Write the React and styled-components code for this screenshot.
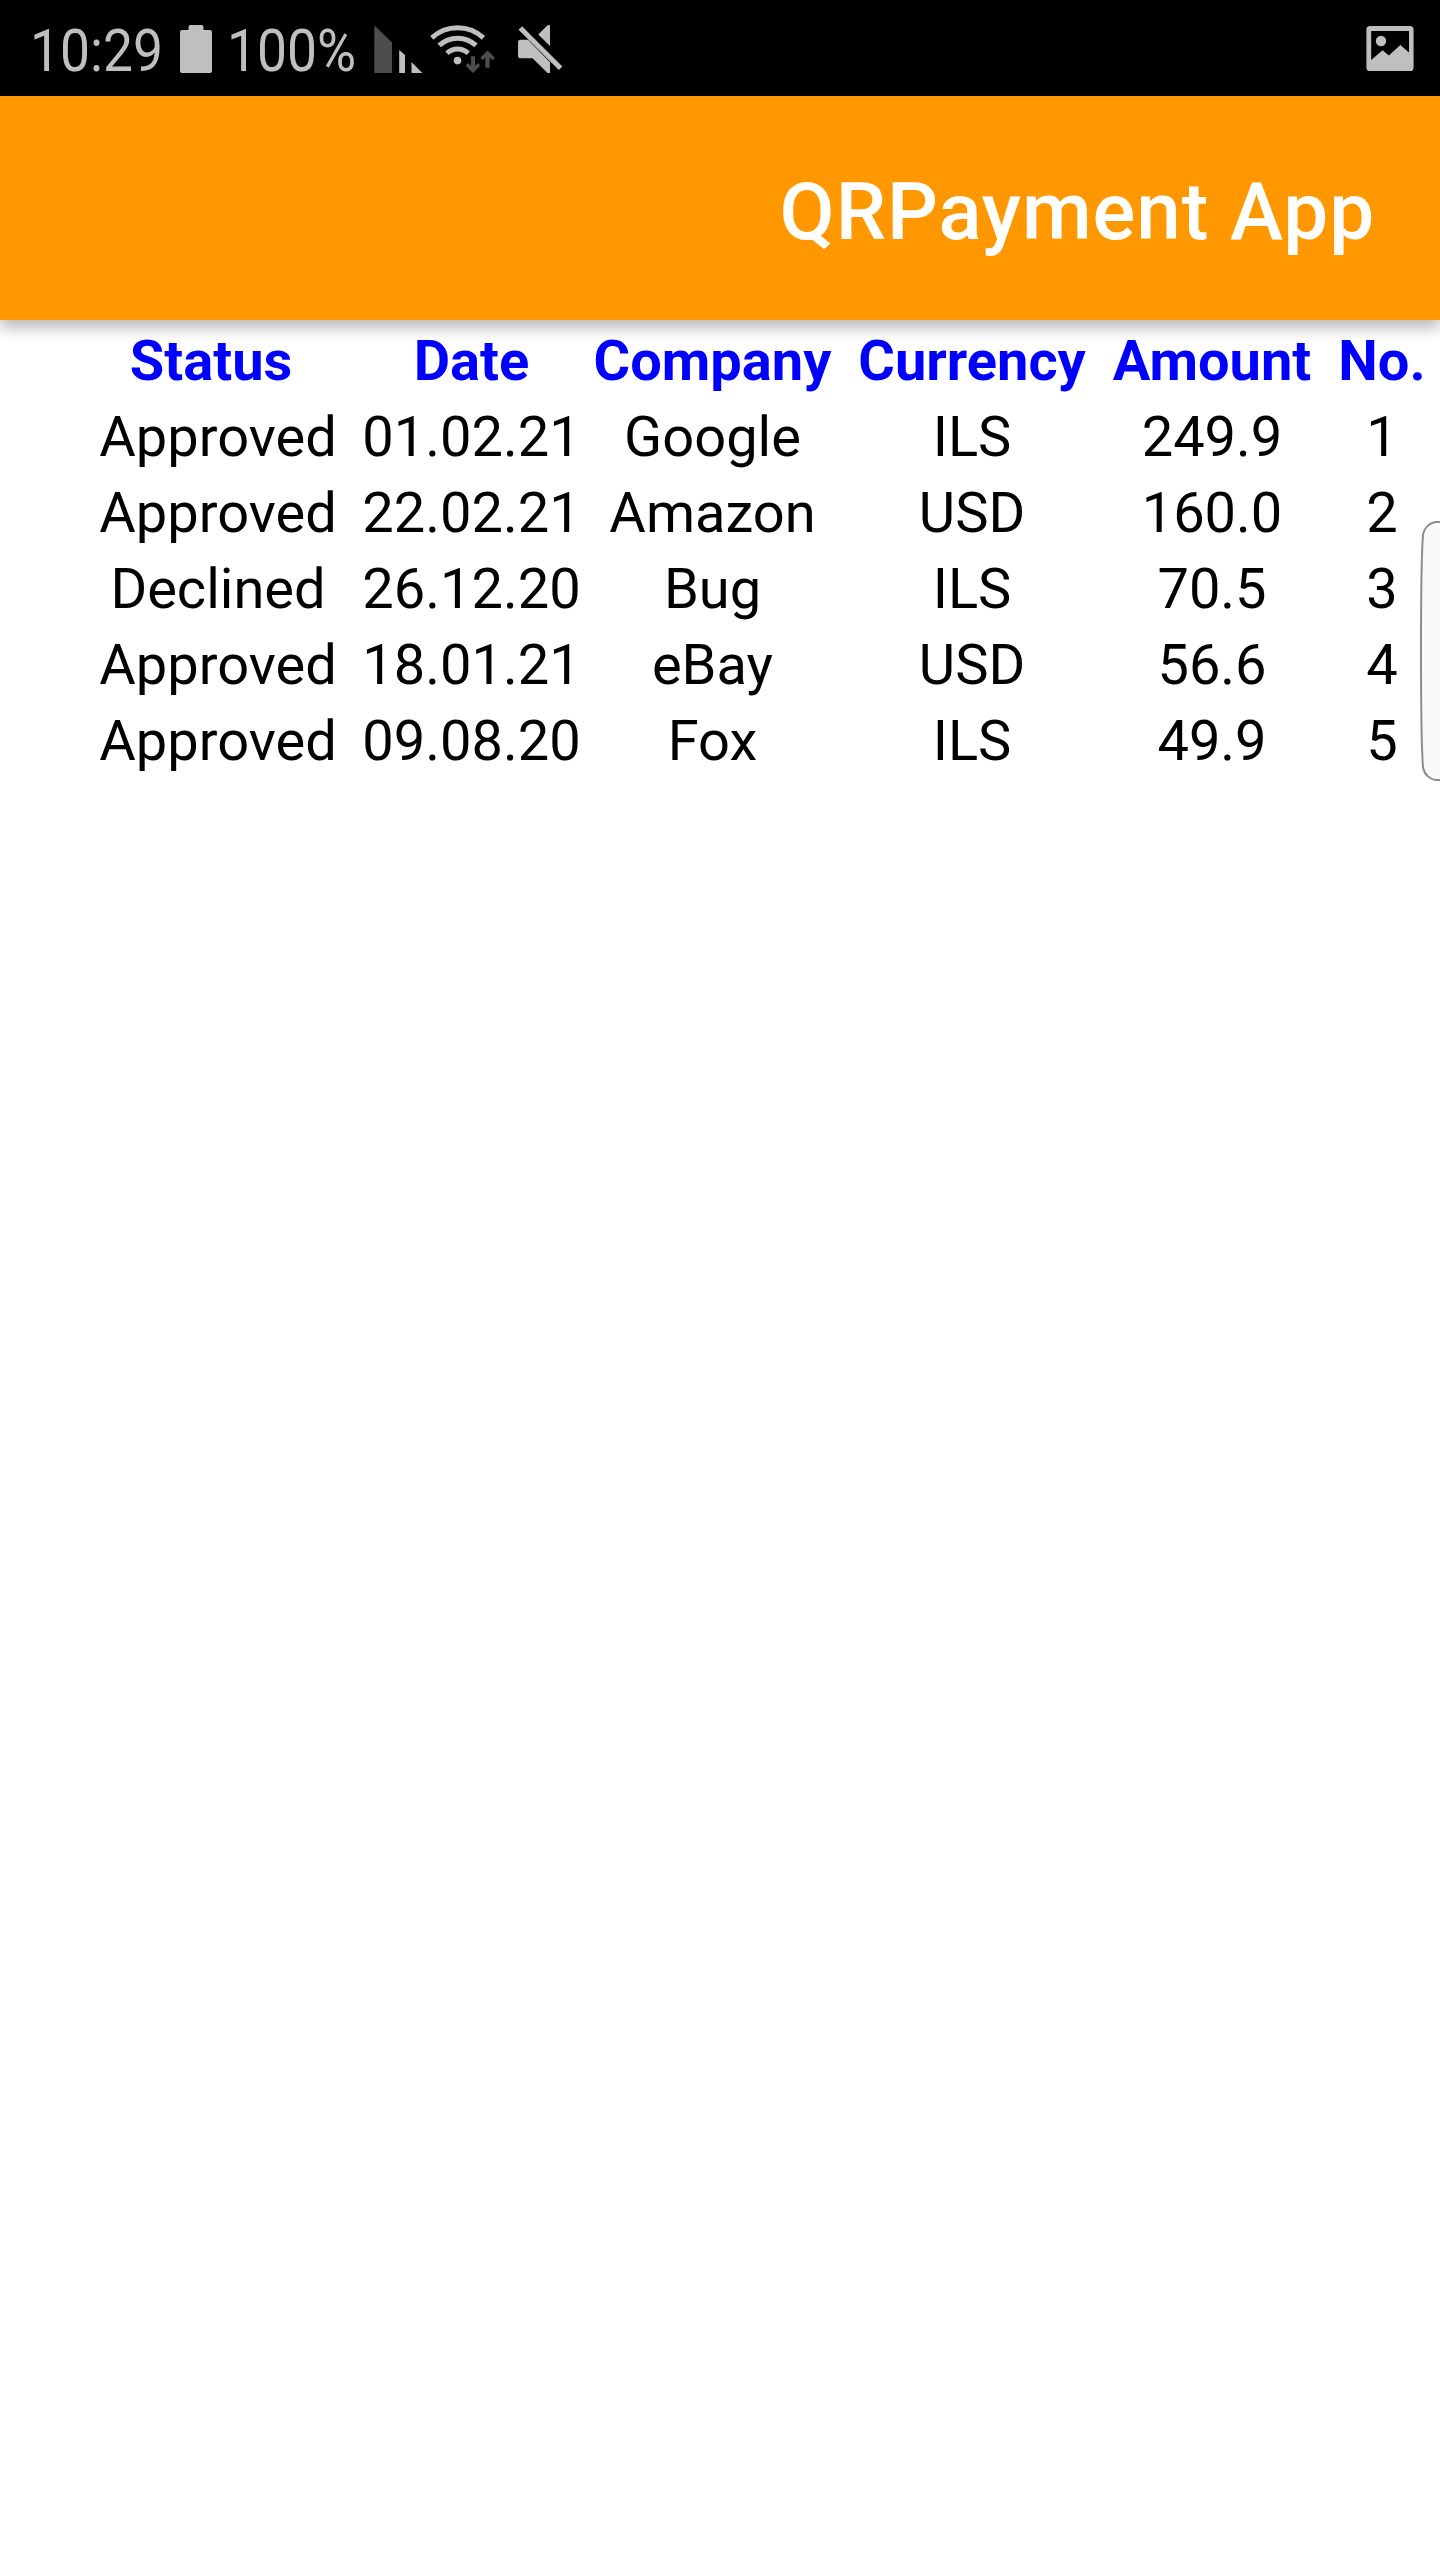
import React from "react";
import styled, { createGlobalStyle } from "styled-components";

const GlobalStyle = createGlobalStyle`
  html, body { margin: 0; padding: 0; background: #fff; }
  * { box-sizing: border-box; }
`;

const Screen = styled.div`
  position: relative;
  display: flex;
  flex-direction: column;
  width: 1440px;
  height: 2560px;
  overflow: hidden;
  background: #fff;
  font-family: Roboto, "Liberation Sans", sans-serif;
`;

const StatusBar = styled.div`
  display: flex;
  justify-content: space-between;
  flex: none;
  height: 96px;
  padding: 0 22px 0 30px;
  background: #000;
  color: #bfbfbf;
`;

const StatusGroup = styled.div`
  display: flex;
`;

const StatusText = styled.div`
  width: ${(p) => p.$width}px;
  line-height: 102px;
  font-size: 60px;
  white-space: nowrap;
  transform: scaleX(0.89);
  transform-origin: 0 50%;
`;

const Glyph = styled.svg`
  display: block;
  flex: none;
`;

const AppBar = styled.header`
  position: relative;
  z-index: 1;
  display: flex;
  justify-content: flex-end;
  flex: none;
  height: 224px;
  padding-right: 65px;
  background: #ff9800;
  box-shadow: 0 8px 14px rgba(0, 0, 0, 0.28);
`;

const Title = styled.h1`
  margin: 0;
  color: #fff;
  font-size: 80px;
  font-weight: 500;
  letter-spacing: 0.9px;
  line-height: 232px;
  white-space: nowrap;
`;

const Table = styled.div`
  display: grid;
  grid-template-columns: 288px 219px 263px 256px 224px 116px;
  grid-auto-rows: 76px;
  justify-content: end;
  padding-top: 4px;
`;

const Cell = styled.div`
  color: ${(p) => (p.$head ? "#0000ff" : "#000")};
  font-size: 56px;
  font-weight: ${(p) => (p.$head ? 700 : 400)};
  line-height: 74px;
  text-align: center;
  white-space: pre;
`;

const EdgeHandle = styled.svg`
  position: absolute;
  top: 516px;
  right: 0;
`;

const columns = ["Status ", "Date", "Company", "Currency", "Amount", "No."];
const rows = [
  ["Approved", "01.02.21", "Google", "ILS", "249.9", "1"],
  ["Approved", "22.02.21", "Amazon", "USD", "160.0", "2"],
  ["Declined", "26.12.20", "Bug", "ILS", "70.5", "3"],
  ["Approved", "18.01.21", "eBay", "USD", "56.6", "4"],
  ["Approved", "09.08.20", "Fox", "ILS", "49.9", "5"],
];

const Battery = () => (
  <Glyph width="47" height="96" viewBox="180 0 47 96" fill="#bfbfbf">
    <path d="M182 30H188.5V27Q188.5 25 190.5 25H201.5Q203.5 25 203.5 27V30H210Q212 30 212 32V71Q212 73 210 73H182Q180 73 180 71V32Q180 30 182 30Z" />
  </Glyph>
);

const Connectivity = () => (
  <Glyph width="210" height="96" viewBox="370 0 210 96" fill="#bfbfbf">
    <path d="M374.3 25.3L392 42.5V73H374.3Z" fill="#4d4d4d" />
    <path d="M399.2 50L405 55V73H399.2ZM411.5 62L422.3 73H411.5Z" />
    <circle cx="457.5" cy="60.6" r="3.8" />
    <g fill="none" stroke="#bfbfbf" strokeWidth="5">
      <path d="M431.8 37.8A38 38 0 0 1 483.4 37.8" />
      <path d="M439.2 45.4A27 27 0 0 1 476 45.4" />
      <path d="M447 53.2A15.5 15.5 0 0 1 468.2 53.2" />
    </g>
    <path
      d="M470.9 56.3H475V66L478 63.1L480.2 65.8L473 73L465.6 65.8L468 63.1L470.9 66ZM485.3 67.8V57.5L482.6 60.3L480.3 57.8L487.6 50.5L494.9 57.8L492.5 60.3L489.6 57.5V67.8Z"
      fill="#4d4d4d"
    />
    <path d="M547.5 25.3H550V46L538.3 34.5ZM520.5 39.8H528L550 62.3V73H547.5L532.6 58.3H520.5Q518 58.3 518 55.8V42.3Q518 39.8 520.5 39.8Z" />
    <path d="M520.3 28L560.6 68.3" fill="none" stroke="#bfbfbf" strokeWidth="5" />
  </Glyph>
);

const PictureNotice = () => (
  <Glyph width="54" height="96" viewBox="1364 0 54 96" fill="#bfbfbf">
    <path
      fillRule="evenodd"
      d="M1370 26H1410Q1413.6 26 1413.6 29.6V67.4Q1413.6 71 1410 71H1370Q1366.4 71 1366.4 67.4V29.6Q1366.4 26 1370 26ZM1371.2 31V60L1382.6 50.3L1388.8 55.5L1400.4 45L1409 52.4V31Z"
    />
    <circle cx="1381" cy="41" r="5.2" />
  </Glyph>
);

export default function App() {
  return (
    <>
      <GlobalStyle />
      <Screen>
        <StatusBar>
          <StatusGroup>
            <StatusText $width={150}>10:29</StatusText>
            <Battery />
            <StatusText $width={143}>100%</StatusText>
            <Connectivity />
          </StatusGroup>
          <PictureNotice />
        </StatusBar>
        <AppBar>
          <Title>QRPayment App</Title>
        </AppBar>
        <Table>
          {columns.map((name) => (
            <Cell key={name} $head>
              {name}
            </Cell>
          ))}
          {rows.map((row, r) =>
            row.map((value, c) => <Cell key={`${r}-${c}`}>{value}</Cell>)
          )}
        </Table>
        <EdgeHandle width="22" height="270" viewBox="0 0 22 270">
          <path
            d="M24 6H19C12 6 6 12 5 19C3.5 38 3 60 3 135C3 210 3.5 232 5 251C6 258 12 264 19 264H24Z"
            fill="#fafafa"
            stroke="#8c8c8c"
            strokeWidth="2"
          />
        </EdgeHandle>
      </Screen>
    </>
  );
}
